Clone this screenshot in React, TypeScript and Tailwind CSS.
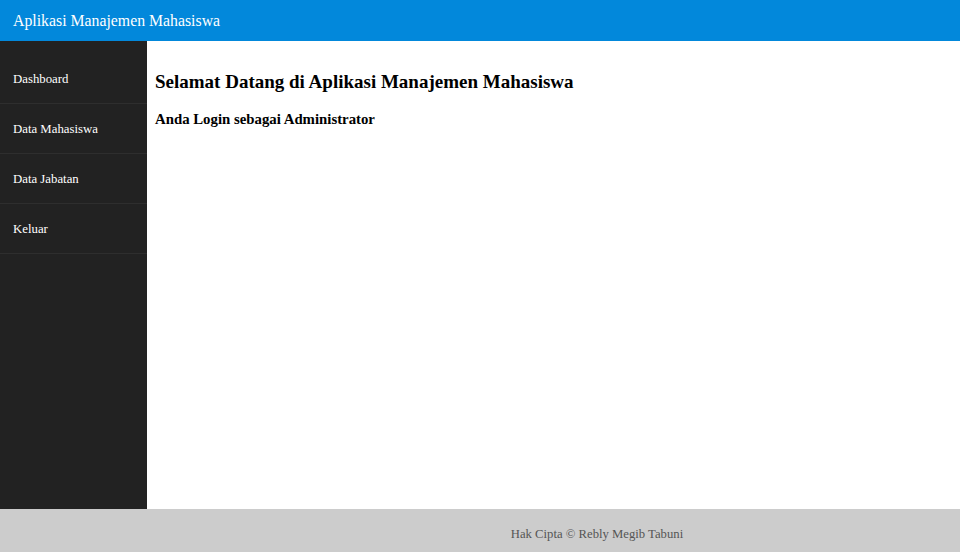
const menu = ['Dashboard', 'Data Mahasiswa', 'Data Jabatan', 'Keluar'];

export default function App() {
  return (
    <div className="flex h-[552px] flex-col font-['Liberation_Serif',serif]">
      <header className="flex h-[41px] shrink-0 items-center bg-[#0288db] px-[13px] text-[15.8px] text-white">
        Aplikasi Manajemen Mahasiswa
      </header>

      <div className="flex flex-1">
        <nav className="w-[147px] shrink-0 bg-[#222222] pt-[13px]">
          {menu.map((item) => (
            <div
              key={item}
              className="flex h-[50px] items-center border-b border-[#2e2e2e] px-[13px] pt-[2px] text-[12.8px] text-white"
            >
              {item}
            </div>
          ))}
        </nav>

        <main className="flex-1 bg-white px-2 pt-[29px]">
          <h1 className="text-[19px] leading-[24px] font-bold text-black">
            Selamat Datang di Aplikasi Manajemen Mahasiswa
          </h1>
          <h2 className="mt-[15px] text-[14.8px] leading-[20px] font-bold text-black">
            Anda Login sebagai Administrator
          </h2>
        </main>
      </div>

      <footer className="flex h-[43px] shrink-0 items-center justify-center bg-[#cccccc] pt-[8px] pl-[234px] text-[12.7px] text-[#555555]">
        Hak Cipta © Rebly Megib Tabuni
      </footer>
    </div>
  );
}
